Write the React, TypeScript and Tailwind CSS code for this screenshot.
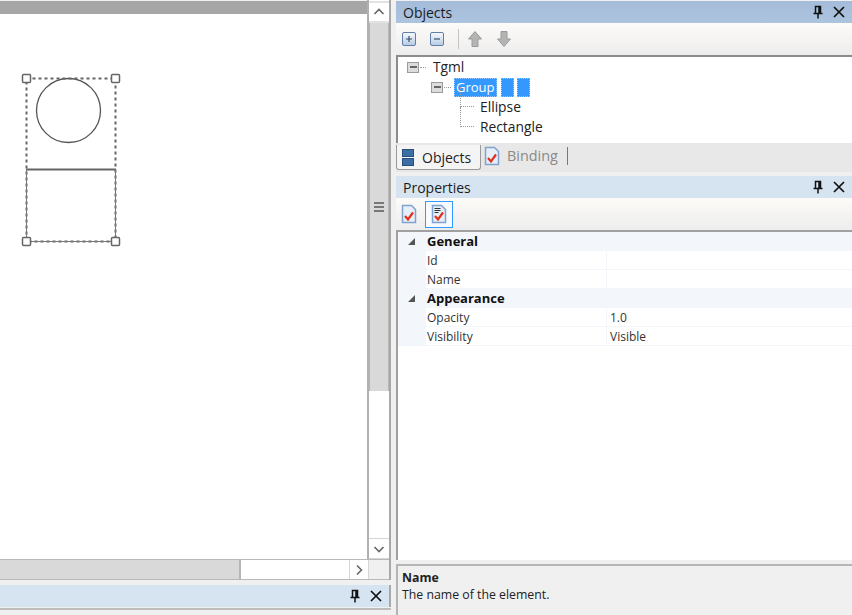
const font = { fontFamily: '"Open Sans", "Noto Sans", sans-serif' };

const Pin = () => (
  <svg width="12" height="14" viewBox="0 0 12 14" className="text-[#111]">
    <path d="M3.5 1.5h5v7h-5zM7 1.5v7M1.5 8.5h9M6 8.5v5" fill="none" stroke="currentColor" strokeWidth="1.5" />
  </svg>
);

const Close = () => (
  <svg width="12" height="12" viewBox="0 0 12 12">
    <path d="M1 1l10 10M11 1L1 11" stroke="#111" strokeWidth="1.7" />
  </svg>
);

const PaneHeader = ({ title, className }: { title?: string; className: string }) => (
  <div className={`flex h-[22px] items-center justify-between pl-[7px] pr-[7px] ${className}`}>
    <span className="text-[14px] text-[#1b1b1b]">{title}</span>
    <div className="flex items-center gap-[9px]">
      <Pin />
      <Close />
    </div>
  </div>
);

const Chevron = ({ d }: { d: string }) => (
  <svg width="12" height="12" viewBox="0 0 12 12">
    <path d={d} fill="none" stroke="#666" strokeWidth="1.6" />
  </svg>
);

const ExpandBox = ({ sign }: { sign: "+" | "-" }) => (
  <div className="flex h-[14px] w-[14px] items-center justify-center rounded-[2px] border border-[#5f7ea8] bg-gradient-to-b from-[#f4f8fd] to-[#b9cde6]">
    <svg width="8" height="8" viewBox="0 0 8 8">
      <path d={sign === "+" ? "M1 4h6M4 1v6" : "M1 4h6"} stroke="#3a4d6b" strokeWidth="1.2" />
    </svg>
  </div>
);

const Arrow = ({ d }: { d: string }) => (
  <svg width="16" height="18" viewBox="0 0 16 18">
    <path d={d} fill="#b4b4b4" stroke="#9a9a9a" />
  </svg>
);

const TreeBox = () => (
  <div className="flex h-[11px] w-[12px] items-center justify-center border border-[#9b9b9b] bg-[#dcdcdc]">
    <div className="h-[2px] w-[7px] bg-[#666]" />
  </div>
);

const DocCheck = ({ lines }: { lines?: boolean }) => (
  <svg width="16" height="20" viewBox="0 0 16 20">
    <path d="M1.5 1.5h9l4 4v13h-13z" fill="#e6eff9" stroke="#7fa3d0" strokeWidth="1.5" />
    {lines && <path d="M3.5 4.5h6M3.5 6.5h6M3.5 8.5h4" stroke="#333" strokeWidth="1" />}
    <path d="M4 12l3 3.5 5-7" fill="none" stroke="#e0301e" strokeWidth="2.2" />
  </svg>
);

const Cubes = () => (
  <svg width="12" height="17" viewBox="0 0 12 17">
    <rect x="0.5" y="0.5" width="11" height="7" fill="#3b6ea5" stroke="#2a4f7a" />
    <rect x="0.5" y="9.5" width="11" height="7" fill="#3b6ea5" stroke="#2a4f7a" />
  </svg>
);

const GroupRow = ({ title }: { title: string }) => (
  <div className="flex h-[19px] items-center bg-[#f3f6fb]">
    <svg width="9" height="9" viewBox="0 0 9 9" className="ml-[9px]">
      <path d="M8 1v7H1z" fill="#555" />
    </svg>
    <span className="ml-[11px] text-[13px] font-bold text-[#111]">{title}</span>
  </div>
);

const PropRow = ({ name, value }: { name: string; value?: string }) => (
  <div className="flex h-[19px] items-center border-b border-[#f2f5fa] bg-[#f3f6fb] pl-[28px] text-[12px] text-[#333]">
    <div className="flex h-full w-[180px] items-center bg-white pl-px pt-[2px]">{name}</div>
    <div className="ml-px flex h-full flex-1 items-center bg-white pl-[3px] pt-[2px]">{value}</div>
  </div>
);

export default function App() {
  return (
    <div className="flex h-[615px] w-[852px] overflow-hidden bg-[#f0f0f0]" style={font}>
      {/* designer side */}
      <div className="flex w-[391px] flex-col">
        <div className="flex h-[580px] flex-col border-r-2 border-[#a8a8a8]">
          <div className="flex min-h-0 flex-1">
            <div className="flex flex-1 flex-col border-r-[2px] border-[#b0b0b0]">
              <div className="mt-[1px] h-[13px] bg-[#a6a6a6]" />
              <div className="flex-1 bg-white">
                <svg width="130" height="250" viewBox="0 0 130 250">
                  <circle cx="68.5" cy="96.5" r="32" fill="none" stroke="#555" strokeWidth="1.3" />
                  <rect x="26.5" y="64.5" width="89" height="163" fill="none" stroke="#666" strokeWidth="2" strokeDasharray="3 3" />
                  <path d="M26 155.5h90" stroke="#666" strokeWidth="2" />
                  <path d="M26.5 155.5v72h89v-72" fill="none" stroke="#777" strokeWidth="1" />
                  {[
                    [26.5, 64.5],
                    [115.5, 64.5],
                    [26.5, 227.5],
                    [115.5, 227.5],
                  ].map(([x, y]) => (
                    <rect key={`${x}-${y}`} x={x - 4} y={y - 4} width="8" height="8" rx="1" fill="#fff" stroke="#666" strokeWidth="1.5" />
                  ))}
                </svg>
              </div>
            </div>
            <div className="flex w-[20px] flex-col bg-white">
              <div className="mt-[1px] flex h-[22px] items-center justify-center border-y-2 border-[#e2e2e2]">
                <Chevron d="M1.5 8L6 3.5 10.5 8" />
              </div>
              <div className="flex h-[368px] items-center justify-center border-x border-[#b5b5b5] bg-[#d9d9d9]">
                <div className="flex w-[10px] flex-col gap-[2px]">
                  <div className="h-[2px] bg-[#777]" />
                  <div className="h-[2px] bg-[#777]" />
                  <div className="h-[2px] bg-[#777]" />
                </div>
              </div>
              <div className="flex-1 bg-white" />
              <div className="flex h-[21px] items-center justify-center border-y border-[#d5d5d5]">
                <Chevron d="M1.5 4L6 8.5 10.5 4" />
              </div>
            </div>
          </div>
          <div className="flex h-[21px] border-y border-[#b8b8b8]">
            <div className="w-[241px] border-r-2 border-[#b5b5b5] bg-[#d9d9d9]" />
            <div className="flex-1 bg-white" />
            <div className="flex w-[20px] items-center justify-center border-x border-[#d5d5d5] bg-white">
              <Chevron d="M4 1.5L8.5 6 4 10.5" />
            </div>
            <div className="w-[20px] bg-[#f0f0f0]" />
          </div>
        </div>
        <div className="mt-[5px] border-r-2 border-[#a8a8a8]">
          <PaneHeader className="bg-[#d6e3f1]" />
        </div>
        <div className="mt-[1px] h-[6px] border-t-2 border-[#bdbdbd]" />
      </div>

      {/* panes side */}
      <div className="ml-[5px] flex flex-1 flex-col pt-[1px]">
        <PaneHeader title="Objects" className="bg-gradient-to-b from-[#a4bcd9] to-[#acc4de]" />
        <div className="flex h-[32px] items-center gap-[14px] bg-gradient-to-b from-[#fdfbf8] to-[#ededed] pl-[6px]">
          <ExpandBox sign="+" />
          <ExpandBox sign="-" />
          <div className="flex items-center gap-[8px]">
            <div className="h-[20px] w-px bg-[#c4c4c4]" />
            <Arrow d="M8 1.5l6.5 7.5H11v7.5H5V9H1.5z" />
            <div className="ml-[5px]">
              <Arrow d="M8 16.5L1.5 9H5V1.5h6V9h3.5z" />
            </div>
          </div>
        </div>
        <div className="h-[88px] border-l-2 border-t-2 border-[#8c8c8c] bg-white pl-[9px] text-[13.8px] text-[#222]">
          <div className="flex h-[20px] items-center">
            <TreeBox />
            <div className="ml-[1px] w-[6px] border-t border-dotted border-[#999]" />
            <span className="ml-[7px]">Tgml</span>
          </div>
          <div className="ml-[24px] flex h-[20px] items-center">
            <TreeBox />
            <div className="ml-[1px] w-[7px] border-t border-dotted border-[#999]" />
            <span className="ml-[3px] border border-dotted border-[#9cc8ff] bg-[#3399ff] px-px text-[13px] leading-[17px] text-white">Group</span>
            <span className="ml-[4px] h-[19px] w-[13px] border border-dotted border-[#9cc8ff] bg-[#3399ff]" />
            <span className="ml-[3px] h-[19px] w-[13px] border border-dotted border-[#9cc8ff] bg-[#3399ff]" />
          </div>
          <div className="ml-[53px] flex h-[20px] items-center">
            <div className="h-[20px] w-[14px] translate-y-[-10px] border-b border-l border-dotted border-[#999]" />
            <span className="ml-[6px]">Ellipse</span>
          </div>
          <div className="ml-[53px] flex h-[20px] items-center">
            <div className="h-[20px] w-[14px] translate-y-[-10px] border-b border-l border-dotted border-[#999]" />
            <span className="ml-[6px]">Rectangle</span>
          </div>
        </div>
        <div className="flex h-[29px] items-start bg-[#e8e8e8] pt-[2px] text-[14px]">
          <div className="flex h-[25px] w-[85px] items-center gap-[8px] rounded-b-[3px] border border-t-0 border-[#9a9a9a] bg-[#f4f4f4] pl-[5px] text-[#222]">
            <Cubes />
            <span>Objects</span>
          </div>
          <div className="ml-[3px] flex h-[22px] items-center gap-[7px] text-[#8a8a8a]">
            <DocCheck />
            <span className="text-[14.4px]">Binding</span>
            <div className="ml-[2px] h-[18px] w-px bg-[#777]" />
          </div>
        </div>
        <div className="mt-[4px]">
          <PaneHeader title="Properties" className="bg-[#d6e3f1]" />
        </div>
        <div className="flex h-[32px] items-center gap-[8px] bg-gradient-to-b from-[#fdfbf8] to-[#ededed] pl-[5px]">
          <DocCheck />
          <div className="flex h-[27px] w-[28px] items-center justify-center border border-[#3399ff] bg-[#f7fbff]">
            <DocCheck lines />
          </div>
        </div>
        <div className="h-[330px] border-l-2 border-t-2 border-[#a0a0a0] bg-white">
          <GroupRow title="General" />
          <PropRow name="Id" />
          <PropRow name="Name" />
          <GroupRow title="Appearance" />
          <PropRow name="Opacity" value="1.0" />
          <PropRow name="Visibility" value="Visible" />
        </div>
        <div className="mt-[4px] flex-1 border-l-2 border-t-2 border-[#b5b5b5] bg-[#f0f0f0] px-[4px] pt-[3px] text-[12.3px] text-[#222]">
          <div className="font-bold leading-[17px]">Name</div>
          <div className="leading-[17px]">The name of the element.</div>
        </div>
      </div>
    </div>
  );
}
